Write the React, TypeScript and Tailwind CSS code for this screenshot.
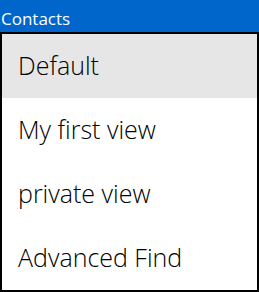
const views = ["Default", "My first view", "private view", "Advanced Find"];

export default function App() {
  return (
    <div className="w-[259px] h-[292px] bg-white flex flex-col font-['Open_Sans',sans-serif]">
      <div className="h-[32px] bg-[#0066cc] text-white text-[17px] leading-none pt-[10px] pl-[1px]">
        Contacts
      </div>
      <div className="flex-1 border-2 border-black flex flex-col">
        {views.map((v, i) => (
          <div
            key={v}
            className={`h-[64px] flex items-center pl-[16px] text-[25px] font-light text-black ${i === 0 ? "bg-[#e6e6e6]" : ""}`}
          >
            {v}
          </div>
        ))}
      </div>
    </div>
  );
}
